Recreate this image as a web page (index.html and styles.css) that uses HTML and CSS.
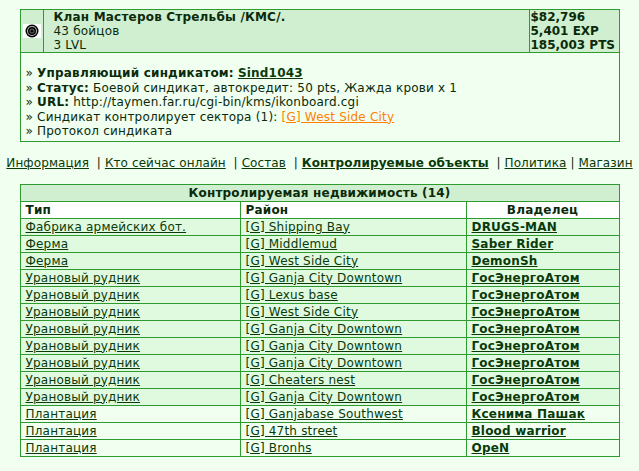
FILE: index.html
```html
<!DOCTYPE html>
<html lang="ru">
<head>
    <meta charset="UTF-8">
    <title>Клан Мастеров Стрельбы</title>
    <link rel="stylesheet" href="styles.css">
</head>
<body>
    <!-- Шапка синдиката -->
    <table class="clan-box">
        <tr class="clan-head">
            <td class="clan-icon">
                <svg width="18" height="14" viewBox="0 0 18 14">
                    <rect width="18" height="14" fill="#fff"/>
                    <circle cx="9" cy="7" r="6.5" fill="#000"/>
                    <circle cx="9" cy="7" r="5" fill="#bbb"/>
                    <circle cx="9" cy="7" r="4" fill="#000"/>
                    <circle cx="9" cy="7" r="2.5" fill="#666"/>
                    <circle cx="9" cy="7" r="1.5" fill="#000"/>
                </svg>
            </td>
            <td class="clan-name">
                <b>Клан Мастеров Стрельбы /КМС/.</b><br>
                43 бойцов<br>
                3 LVL
            </td>
            <td class="clan-stats">
                $82,796<br>
                5,401 EXP<br>
                185,003 PTS
            </td>
        </tr>
        <tr>
            <td colspan="3" class="clan-info">
                » <b>Управляющий синдикатом:</b> <a href="#" class="owner">Sind1043</a><br>
                » <b>Статус:</b> Боевой синдикат, автокредит: 50 pts, Жажда крови x 1<br>
                » <b>URL:</b> http://taymen.far.ru/cgi-bin/kms/ikonboard.cgi<br>
                » Синдикат контролирует сектора (1): <a href="#" class="sector">[G] West Side City</a><br>
                » Протокол синдиката
            </td>
        </tr>
    </table>

    <div class="nav">
        <a href="#">Информация</a>&nbsp; | <a href="#">Кто сейчас онлайн</a>&nbsp; | <a href="#">Состав</a>&nbsp; | <a href="#" class="current">Контролируемые объекты</a>&nbsp; | <a href="#">Политика</a> | <a href="#">Магазин</a>
    </div>

    <table class="estate">
        <colgroup>
            <col class="col-type">
            <col class="col-area">
            <col>
        </colgroup>
        <tr>
            <td colspan="3" class="estate-title">Контролируемая недвижимость (14)</td>
        </tr>
        <tr class="estate-cols">
            <td>Тип</td>
            <td>Район</td>
            <td class="col-owner">Владелец</td>
        </tr>
        <tbody id="estateRows"></tbody>
    </table>

    <script>
        const rows = [
            ['Фабрика армейских бот.', '[G] Shipping Bay', 'DRUGS-MAN', 'a'],
            ['Ферма', '[G] Middlemud', 'Saber Rider', 'a'],
            ['Ферма', '[G] West Side City', 'DemonSh', 'a'],
            ['Урановый рудник', '[G] Ganja City Downtown', 'ГосЭнергоАтом', 'a'],
            ['Урановый рудник', '[G] Lexus base', 'ГосЭнергоАтом', 'a'],
            ['Урановый рудник', '[G] West Side City', 'ГосЭнергоАтом', 'a'],
            ['Урановый рудник', '[G] Ganja City Downtown', 'ГосЭнергоАтом', 'a'],
            ['Урановый рудник', '[G] Ganja City Downtown', 'ГосЭнергоАтом', 'a'],
            ['Урановый рудник', '[G] Ganja City Downtown', 'ГосЭнергоАтом', 'a'],
            ['Урановый рудник', '[G] Cheaters nest', 'ГосЭнергоАтом', 'a'],
            ['Урановый рудник', '[G] Ganja City Downtown', 'ГосЭнергоАтом', 'a'],
            ['Плантация', '[G] Ganjabase Southwest', 'Ксенима Пашак', 'b'],
            ['Плантация', '[G] 47th street', 'Blood warrior', 'b'],
            ['Плантация', '[G] Bronhs', 'OpeN', 'b']
        ];

        const body = document.getElementById('estateRows');
        rows.forEach(r => {
            const tr = document.createElement('tr');
            tr.className = 'row-' + r[3];
            tr.innerHTML = `
                <td><a href="#">${r[0]}</a></td>
                <td><a href="#">${r[1]}</a></td>
                <td><a href="#" class="owner">${r[2]}</a></td>
            `;
            body.appendChild(tr);
        });
    </script>
</body>
</html>
```

FILE: styles.css
```css
/* Общие стили */
body {
    margin: 0;
    padding-top: 9px;
    background-color: #f0fff0;
    color: #0a2a0a;
    font-family: "DejaVu Sans", Verdana, sans-serif;
    font-size: 12px;
    letter-spacing: 0.2px;
}

a {
    color: #0a3a0a;
}

table {
    border-collapse: collapse;
    margin: 0 auto;
    width: 600px;
}

td {
    border: 1px solid #2f9a2f;
    padding: 0 5px;
    line-height: 14px;
}

/* Шапка клана */
.clan-head {
    background-color: #d0eed0;
}

.clan-icon {
    width: 12px;
    padding: 0 2px;
}

.clan-icon svg {
    display: block;
}

.clan-name {
    padding: 0 10px;
}

.clan-stats {
    width: 88px;
    padding: 0 0 0 1px;
    font-weight: bold;
    white-space: nowrap;
    letter-spacing: 0;
}

.clan-info {
    padding: 13px 5px 2px 5px;
    line-height: 14.5px;
}

.owner {
    font-weight: bold;
}

.sector {
    color: #ff8000;
}

/* Меню */
.nav {
    text-align: center;
    white-space: nowrap;
    letter-spacing: 0.1px;
    margin: 14px 0 14px 0;
}

.nav .current {
    font-weight: bold;
}

/* Таблица недвижимости */
.estate {
    table-layout: fixed;
}

.estate td {
    height: 16px;
    padding: 0 5px;
    white-space: nowrap;
}

.estate-title {
    background-color: #d0eed0;
    text-align: center;
    font-weight: bold;
}

.estate-cols {
    background-color: #fff;
    font-weight: bold;
}

.col-type {
    width: 220px;
}

.col-area {
    width: 226px;
}

.col-owner {
    text-align: center;
}

.row-a {
    background-color: #e0fae0;
}

.row-b {
    background-color: #f0fff0;
}
```
